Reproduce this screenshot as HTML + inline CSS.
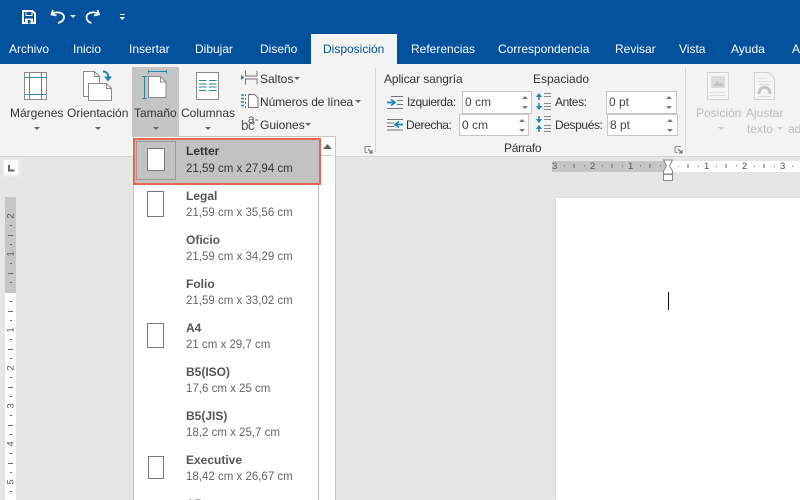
<!DOCTYPE html>
<html><head><meta charset="utf-8"><style>
html,body{margin:0;padding:0;width:800px;height:500px;overflow:hidden}
#w{position:absolute;left:0;top:0;width:800px;height:500px;overflow:hidden;background:#e6e6e6;font-family:"Liberation Sans",sans-serif;font-size:12px;color:#333}
#w div{position:absolute;white-space:nowrap}
.tab{top:41px;color:#fff;font-size:12px;line-height:16px}
.l{line-height:16px;color:#333}
.n{letter-spacing:-.4px}
.b{font-weight:bold;color:#555;line-height:15px;font-size:12px;left:186px}
.s{color:#666;line-height:15px;font-size:11.5px;left:186px}
.inp{background:#fff;border:1px solid #c6c6c6;box-sizing:border-box;padding-left:2px;color:#444}
.pg{background:#fff;border:1px solid #7a7a7a;box-sizing:border-box}
.ar{width:0;height:0;border-left:3px solid transparent;border-right:3px solid transparent;border-top:3px solid #666}
svg{position:absolute;overflow:visible}
</style></head><body><div id="w">
<div style="left:0;top:0;width:800px;height:64px;background:#01519d"></div>
<svg style="left:0;top:0" width="140" height="34" fill="none">
<path d="M23 11h9.500l2.500 2.500V23H23z" stroke="#fff" stroke-width="2"/>
<path d="M26 11.500h6v4h-6z" stroke="#fff"/>
<path d="M25 18.500h8v5h-8z" fill="#fff"/><path d="M28 20h2.500v3.500H28z" fill="#01519d"/>
<path d="M53 10l-1.500 4.500 5 1" stroke="#fff" stroke-width="1.800"/><path d="M52 14.500c3-3.500 12-2.500 12 2.500 0 3-2.500 5-6 6" stroke="#fff" stroke-width="1.800"/>
<path d="M70 15h6l-3 3z" fill="#dfe9f3"/>
<path d="M97.500 10l1.500 4.500-5 1" stroke="#fff" stroke-width="1.800"/><path d="M98.500 14.500c-3-3.500-12-2.500-12 2.500 0 3 1.500 5 5 6" stroke="#fff" stroke-width="1.800"/>
<path d="M120 14.500h4.500" stroke="#fff"/><path d="M119.500 17h5.500l-2.750 3z" fill="#fff"/>
</svg>
<div class="tab" style="left:9px">Archivo</div>
<div class="tab" style="left:73px">Inicio</div>
<div class="tab" style="left:129px">Insertar</div>
<div class="tab" style="left:195px">Dibujar</div>
<div class="tab" style="left:260px">Diseño</div>
<div style="left:311px;top:34px;width:86px;height:30px;background:#f3f3f3"></div>
<div class="tab" style="left:323px;color:#01519d">Disposición</div>
<div class="tab" style="left:411px">Referencias</div>
<div class="tab" style="left:498px">Correspondencia</div>
<div class="tab" style="left:615px">Revisar</div>
<div class="tab" style="left:679px">Vista</div>
<div class="tab" style="left:731px">Ayuda</div>
<div class="tab" style="left:792px">A</div>

<div style="left:0;top:64px;width:800px;height:92px;background:#f3f3f3;border-bottom:1px solid #d4d4d4"></div>
<div style="left:132px;top:67px;width:47px;height:70px;background:#c5c5c5"></div>
<div style="left:375px;top:68px;width:1px;height:84px;background:#d4d4d4"></div>
<div style="left:685px;top:68px;width:1px;height:84px;background:#d4d4d4"></div>

<svg style="left:0;top:64px" width="800" height="92" fill="none">
<rect x="24.500" y="8.500" width="22" height="27" fill="#fff" stroke="#8a8a8a"/>
<path d="M29.500 9v26M41.500 9v26M25 13.500h21M25 30.500h21" stroke="#2e8fb3"/>
<path d="M83.500 7.500h11l5 5v20h-16z" fill="#fff" stroke="#8a8a8a"/>
<path d="M88.500 19.500h18l5 5v12h-23z" fill="#fff" stroke="#8a8a8a"/>
<path d="M94.500 7.500v5h5M106.500 19.500v5h5" stroke="#8a8a8a"/>
<path d="M103 7.500c4 0 6 3 5 7" stroke="#1f86ae" stroke-width="2"/><path d="M104 12.500h8l-4 5z" fill="#1f86ae"/>
<path d="M148.500 7.500h18M148.500 6v3.500M166.500 6v3.500" stroke="#2b87ad"/>
<path d="M144.500 12v22M142 12.500h5M142 34.500h5" stroke="#2b87ad"/>
<path d="M148.500 12.500h12l5.500 5.500v15.500h-17.500z" fill="#fff" stroke="#8a8a8a"/><path d="M160.500 12.500v5.500h5.500" stroke="#8a8a8a"/>
<rect x="196.500" y="8.500" width="22" height="27" fill="#fff" stroke="#8a8a8a"/>
<path d="M199 16.500h7.500M199 20h7.500M199 23h7.500M199 26.500h7.500M209 16.500h7.500M209 20h7.500M209 23h7.500M209 26.500h7.500" stroke="#2b87ad"/>
<path d="M245.500 6.500v5.500h11.500V6.500M245.500 20.500v-5.500h11.500v5.500" stroke="#777"/>
<path d="M241 11l3.500 2.500-3.500 2.500z" fill="#2b87ad"/>
<path d="M241 31h3M241 34.500h3M241 38h3M241 41.500h3" stroke="#2b87ad" stroke-width="1.500"/><path d="M245.500 30v14" stroke="#2b87ad" stroke-dasharray="2 2"/>
<path d="M248.500 30.500h6l3.500 3.500v9.500h-9.500z" fill="#fff" stroke="#777"/>
</svg>

<div style="left:241px;top:118px;font-size:13.500px;color:#555;line-height:16px">b</div>
<div style="left:248px;top:118px;font-size:13.500px;color:#555;line-height:16px">c</div>
<div style="left:248px;top:113px;font-size:12px;color:#555;line-height:12px">a-</div>

<div class="l" style="left:10px;top:105px">Márgenes</div>
<div class="l" style="left:67px;top:105px">Orientación</div>
<div class="l" style="left:134px;top:105px">Tamaño</div>
<div class="l" style="left:181px;top:105px">Columnas</div>
<div class="ar" style="left:34px;top:127px"></div>
<div class="ar" style="left:95px;top:127px"></div>
<div class="ar" style="left:153px;top:127px"></div>
<div class="ar" style="left:205px;top:127px"></div>
<div class="l" style="left:260px;top:71px">Saltos</div>
<div class="ar" style="left:294px;top:77px"></div>
<div class="l" style="left:260px;top:94px;letter-spacing:-.1px">Números de línea</div>
<div class="ar" style="left:355px;top:100px"></div>
<div class="l" style="left:260px;top:117px">Guiones</div>
<div class="ar" style="left:305px;top:123px"></div>

<div class="l" style="left:384px;top:71px;letter-spacing:-.1px">Aplicar sangría</div>
<div class="l" style="left:533px;top:71px">Espaciado</div>
<div class="l n" style="left:407px;top:94px">Izquierda:</div>
<div class="l n" style="left:406px;top:117px">Derecha:</div>
<div class="l n" style="left:555px;top:94px">Antes:</div>
<div class="l n" style="left:555px;top:117px">Después:</div>
<div class="inp" style="left:462px;top:91px;width:70px;height:23px;line-height:21px">0 cm</div>
<div class="inp" style="left:459px;top:114px;width:70px;height:22px;line-height:20px">0 cm</div>
<div class="inp" style="left:606px;top:91px;width:71px;height:23px;line-height:21px">0 pt</div>
<div class="inp" style="left:607px;top:114px;width:71px;height:22px;line-height:20px">8 pt</div>
<div class="l" style="left:504px;top:140px;letter-spacing:-.3px">Párrafo</div>

<svg style="left:0;top:0" width="800" height="200" fill="none">
<path d="M522 99h6l-3-3zM522 106h6l-3 3zM519 122h6l-3-3zM519 129h6l-3 3zM666 99h6l-3-3zM666 106h6l-3 3zM667 122h6l-3-3zM667 129h6l-3 3z" fill="#777"/>
<path d="M391 96.500h12M397 100.500h6M397 104.500h6M387 108.500h16" stroke="#777"/>
<path d="M387 102.500h7M391 99.500l4 3-4 3" stroke="#1786b4" stroke-width="1.700"/>
<path d="M387 119.500h16M387 123h7M387 126.500h7M387 130h16" stroke="#777"/>
<path d="M396 124.500h7M399 121.500l-4 3 4 3" stroke="#1786b4" stroke-width="1.700"/>
<path d="M544 93.500h7M544 96.500h7M544 103.500h7M544 106.500h7M544 109.500h7" stroke="#888"/>
<path d="M539 94v6M539 103v6" stroke="#1786b4" stroke-width="1.500"/><path d="M536 97l3-4 3 4zM536 106l3 4 3-4z" fill="#1786b4"/>
<path d="M544 116.500h7M544 119.500h7M544 125.500h7M544 128.500h7M544 131.500h7" stroke="#888"/>
<path d="M539 116v6M539 126v6" stroke="#1786b4" stroke-width="1.500"/><path d="M536 119l3 4 3-4zM536 129l3-4 3 4z" fill="#1786b4"/>
<path d="M365 146.500h6M365 146.500v6M365.500 152.500h2" stroke="#888"/><path d="M368 149l4 4M372 150v3h-3" stroke="#666"/>
<path d="M675 146.500h6M675 146.500v6M675.500 152.500h2" stroke="#888"/><path d="M678 149l4 4M682 150v3h-3" stroke="#666"/>
<rect x="707.500" y="72.500" width="21" height="27" fill="#f6f4f4" stroke="#d6d0d0"/>
<rect x="711" y="76" width="14" height="12" fill="#e0dcdc"/>
<path d="M713 86l4-5 3 3 2-2 2 4z" fill="#c6c2c2"/>
<path d="M710 92.500h16M710 95.500h16" stroke="#ddd"/>
<path d="M754.500 72.500h14l6 6v21h-20z" fill="#f6f5f5" stroke="#d4d0d0"/>
<path d="M758 78.500h9M758 81.500h13M758 84.500h13M758 96.500h13" stroke="#ddd"/>
<path d="M759 94c0-9 11-9 11 0" stroke="#c8c4c4" stroke-width="3"/>
</svg>
<div class="l" style="left:696px;top:105px;color:#bcbcbc">Posición</div>
<div class="l" style="left:746px;top:105px;color:#bcbcbc">Ajustar</div>
<div class="l" style="left:747px;top:121px;color:#bcbcbc">texto</div>
<div class="l" style="left:788px;top:121px;color:#bcbcbc">ad</div>
<div class="ar" style="left:718px;top:127px;border-top-color:#ccc"></div>
<div class="ar" style="left:777px;top:127px;border-top-color:#ccc"></div>

<div style="left:552px;top:161px;width:114px;height:11px;background:#c6c6c6"></div>
<div style="left:666px;top:161px;width:134px;height:11px;background:#fff"></div>
<div style="left:552px;top:160px;font-size:9.500px;line-height:13px;color:#555"><div style="left:0">3</div><div style="left:38px">2</div><div style="left:76px">1</div><div style="left:152px">1</div><div style="left:190px">2</div><div style="left:228px">3</div></div>
<svg style="left:0;top:0" width="800" height="500" fill="none">
<path d="M564 166h1M574 164v4M584 166h1M602 166h1M612 164v4M622 166h1M640 166h1M650 164v4M660 166h1M678 166h1M688 164v4M698 166h1M716 166h1M726 164v4M736 166h1M754 166h1M764 164v4M774 166h1M792 166h1" stroke="#666"/>
<path d="M663.500 160h9l-3 6 3 5v3h-9v-3l3-5z" fill="#fff" stroke="#888"/>
<path d="M663.500 174.500h9v6h-9z" fill="#fff" stroke="#888"/>
</svg>
<div style="left:5px;top:197px;width:11px;height:96px;background:#c6c6c6"></div>
<div style="left:5px;top:293px;width:11px;height:207px;background:#fff"></div>
<svg style="left:0;top:190px" width="20" height="310" fill="none">
<path d="M10 35.500h2M8 45.500h5M10 54.500h2M10 73.500h2M8 83.500h5M10 92.500h2M10 111.500h2M8 121.500h5M10 130.500h2M10 149.500h2M8 159.500h5M10 168.500h2M10 187.500h2M8 197.500h5M10 206.500h2M10 225.500h2M8 235.500h5M10 244.500h2M10 263.500h2M8 273.500h5M10 282.500h2M10 301.500h2" stroke="#666"/>
<g font-size="9.500" fill="#555" font-family="Liberation Sans" text-anchor="middle">
<text x="10.500" y="29" transform="rotate(-90 10.500 26)">2</text>
<text x="10.500" y="67" transform="rotate(-90 10.500 64)">1</text>
<text x="10.500" y="143" transform="rotate(-90 10.500 140)">1</text>
<text x="10.500" y="181" transform="rotate(-90 10.500 178)">2</text>
<text x="10.500" y="219" transform="rotate(-90 10.500 216)">3</text>
<text x="10.500" y="257" transform="rotate(-90 10.500 254)">4</text>
<text x="10.500" y="295" transform="rotate(-90 10.500 292)">5</text>
</g></svg>
<div style="left:3px;top:159px;width:18px;height:18px;background:#ececec"></div>
<div style="left:4px;top:160px;width:14px;height:15px;background:#fff"></div>
<svg style="left:0;top:0" width="30" height="180" fill="none"><path d="M9 165v5.500h5.500" stroke="#666" stroke-width="2"/></svg>

<div style="left:556px;top:198px;width:244px;height:302px;background:#fff;box-shadow:0 0 2px #ccc"></div>
<div style="left:668px;top:292px;width:1px;height:18px;background:#111"></div>

<div style="left:133px;top:136px;width:203px;height:364px;background:#fff;border:1px solid #c6c6c6;border-bottom:0;box-sizing:border-box"></div>
<div style="left:318px;top:137px;width:1px;height:363px;background:#bbb"></div>
<div style="left:320px;top:140px;width:13px;height:15px;background:#fff;border-bottom:1px solid #c8c8c8"></div>
<svg style="left:320px;top:140px" width="16" height="16"><path d="M3 9h9l-4.500-5z" fill="#666"/></svg>

<div style="left:133px;top:138px;width:188px;height:47px;background:#c2c2c2;border:2px solid #e8654f;box-sizing:border-box"></div>
<div style="left:136px;top:141px;width:40px;height:39px;border:1px solid #999;box-sizing:border-box"></div>
<div class="pg" style="left:147px;top:148px;width:18px;height:23px"></div>
<div class="b" style="top:144px;color:#333">Letter</div>
<div class="s" style="top:162px;color:#333">21,59 cm x 27,94 cm</div>

<div class="pg" style="left:147px;top:191px;width:17px;height:26px"></div>
<div class="b" style="top:189px">Legal</div><div class="s" style="top:206px">21,59 cm x 35,56 cm</div>
<div class="b" style="top:233px">Oficio</div><div class="s" style="top:250px">21,59 cm x 34,29 cm</div>
<div class="b" style="top:277px">Folio</div><div class="s" style="top:294px">21,59 cm x 33,02 cm</div>
<div class="pg" style="left:147px;top:323px;width:17px;height:25px"></div>
<div class="b" style="top:321px">A4</div><div class="s" style="top:338px">21 cm x 29,7 cm</div>
<div class="b" style="top:365px">B5(ISO)</div><div class="s" style="top:382px">17,6 cm x 25 cm</div>
<div class="b" style="top:409px">B5(JIS)</div><div class="s" style="top:426px">18,2 cm x 25,7 cm</div>
<div class="pg" style="left:148px;top:456px;width:16px;height:23px"></div>
<div class="b" style="top:453px">Executive</div><div class="s" style="top:470px">18,42 cm x 26,67 cm</div>
<div class="b" style="top:497px">A5</div>
</div></body></html>
